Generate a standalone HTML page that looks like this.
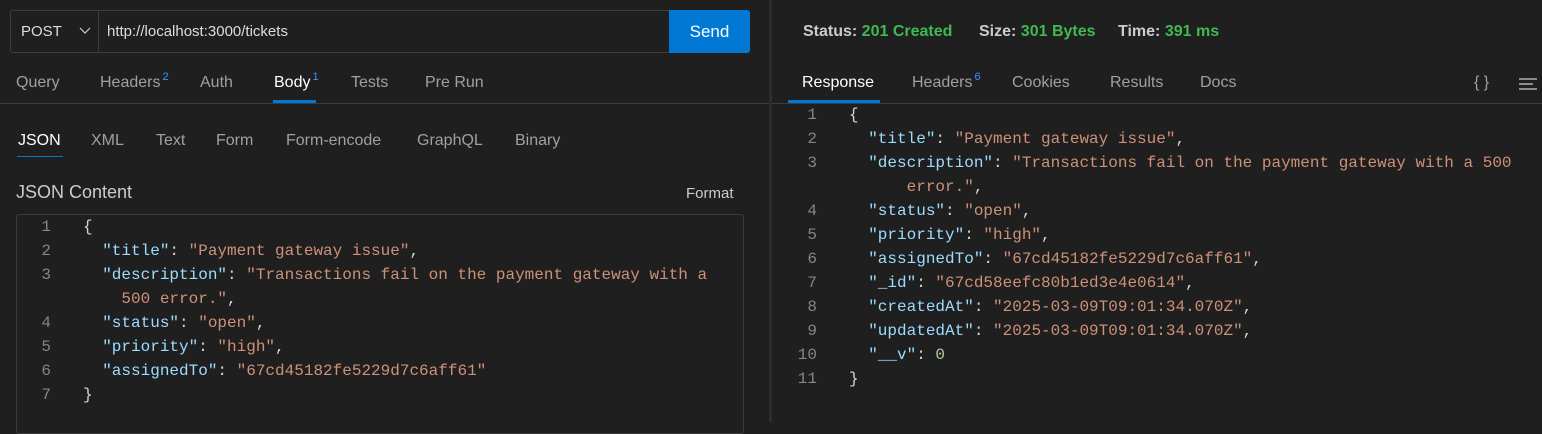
<!DOCTYPE html>
<html><head><meta charset="utf-8"><style>
*{margin:0;padding:0;box-sizing:border-box}
body{width:1542px;height:422px;background:#1f1f1f;font-family:"Liberation Sans",sans-serif;color:#ccc;position:relative;overflow:hidden}
.a{position:absolute;white-space:pre}
.t{font-size:16px;color:#a0a0a0}
.code{font-family:"Liberation Mono",monospace;font-size:16px;line-height:24px;color:#d4d4d4}
.k{color:#9cdcfe}.s{color:#ce9178}.n{color:#b5cea8}
.ln{color:#858585;text-align:right;width:20px}
sup{color:#3794ff;font-size:11px;position:relative;top:-2px;margin-left:2px;vertical-align:top;line-height:1}
.g{color:#3fb950}
</style></head><body>
<div class="a" style="left:10px;top:10px;width:740px;height:43px;border:1px solid #3c3c3c;border-radius:3px;background:#1f1f1f"></div>
<div class="a" style="left:98px;top:11px;width:1px;height:41px;background:#3c3c3c"></div>
<div class="a" style="left:21px;top:23px;font-size:15px;color:#ddd">POST</div>
<svg class="a" style="left:79px;top:27px" width="12" height="8"><path d="M1 1L6 6L11 1" stroke="#ccc" fill="none" stroke-width="1.2"/></svg>
<div class="a" style="left:107px;top:23px;font-size:15px;color:#ddd">http://localhost:3000/tickets</div>
<div class="a" style="left:669px;top:10px;width:81px;height:43px;background:#0078d4;border-radius:0 3px 3px 0;color:#fff;font-size:17px;text-align:center;line-height:43px">Send</div>

<div class="a t" style="left:16px;top:74px">Query</div>
<div class="a t" style="left:100px;top:74px">Headers<sup>2</sup></div>
<div class="a t" style="left:200px;top:74px">Auth</div>
<div class="a t" style="left:274px;top:74px;color:#fff">Body<sup>1</sup></div>
<div class="a" style="left:273px;top:100px;width:43px;height:3px;background:#0078d4"></div>
<div class="a t" style="left:351px;top:74px">Tests</div>
<div class="a t" style="left:425px;top:74px">Pre Run</div>
<div class="a" style="left:0;top:103px;width:769px;height:1px;background:#3c3c3c"></div>

<div class="a t" style="left:18px;top:132px;color:#fff">JSON</div>
<div class="a" style="left:17px;top:156px;width:46px;height:1px;background:#0078d4"></div>
<div class="a t" style="left:91px;top:132px">XML</div>
<div class="a t" style="left:156px;top:132px">Text</div>
<div class="a t" style="left:216px;top:132px">Form</div>
<div class="a t" style="left:286px;top:132px">Form-encode</div>
<div class="a t" style="left:417px;top:132px">GraphQL</div>
<div class="a t" style="left:515px;top:132px">Binary</div>

<div class="a" style="left:16px;top:182px;font-size:18px;color:#ccc">JSON Content</div>
<div class="a" style="left:686px;top:185px;font-size:15px;color:#ccc">Format</div>
<div class="a" style="left:16px;top:214px;width:728px;height:220px;border:1px solid #3c3c3c;border-radius:3px"></div>

<div class="a code" style="left:31px;top:215px"><div class="ln">1</div><div class="ln">2</div><div class="ln">3</div><div class="ln">&nbsp;</div><div class="ln">4</div><div class="ln">5</div><div class="ln">6</div><div class="ln">7</div></div>
<div class="a code" style="left:83px;top:215px">{
  <span class="k">"title"</span>: <span class="s">"Payment gateway issue"</span>,
  <span class="k">"description"</span>: <span class="s">"Transactions fail on the payment gateway with a</span>
<span class="s">    500 error."</span>,
  <span class="k">"status"</span>: <span class="s">"open"</span>,
  <span class="k">"priority"</span>: <span class="s">"high"</span>,
  <span class="k">"assignedTo"</span>: <span class="s">"67cd45182fe5229d7c6aff61"</span>
}</div>

<div class="a" style="left:769px;top:0;width:3px;height:422px;background:#2d2d2d"></div>

<div class="a" style="left:803px;top:23px;font-size:16px;font-weight:bold;color:#ccc">Status: <span class="g">201 Created</span></div>
<div class="a" style="left:979px;top:23px;font-size:16px;font-weight:bold;color:#ccc">Size: <span class="g">301 Bytes</span></div>
<div class="a" style="left:1118px;top:23px;font-size:16px;font-weight:bold;color:#ccc">Time: <span class="g">391 ms</span></div>

<div class="a t" style="left:802px;top:74px;color:#fff">Response</div>
<div class="a" style="left:788px;top:100px;width:92px;height:3px;background:#0078d4"></div>
<div class="a t" style="left:912px;top:74px">Headers<sup>6</sup></div>
<div class="a t" style="left:1012px;top:74px">Cookies</div>
<div class="a t" style="left:1110px;top:74px">Results</div>
<div class="a t" style="left:1200px;top:74px">Docs</div>
<div class="a t" style="left:1474px;top:74px">{ }</div>
<svg class="a" style="left:1518px;top:77px" width="20" height="14"><path d="M1 2H19M1 7H15M1 12H19" stroke="#ccc" stroke-width="1.3"/></svg>
<div class="a" style="left:772px;top:103px;width:770px;height:1px;background:#3c3c3c"></div>

<div class="a code" style="left:797px;top:103px"><div class="ln">1</div><div class="ln">2</div><div class="ln">3</div><div class="ln">&nbsp;</div><div class="ln">4</div><div class="ln">5</div><div class="ln">6</div><div class="ln">7</div><div class="ln">8</div><div class="ln">9</div><div class="ln">10</div><div class="ln">11</div></div>
<div class="a code" style="left:849px;top:103px">{
  <span class="k">"title"</span>: <span class="s">"Payment gateway issue"</span>,
  <span class="k">"description"</span>: <span class="s">"Transactions fail on the payment gateway with a 500</span>
<span class="s">      error."</span>,
  <span class="k">"status"</span>: <span class="s">"open"</span>,
  <span class="k">"priority"</span>: <span class="s">"high"</span>,
  <span class="k">"assignedTo"</span>: <span class="s">"67cd45182fe5229d7c6aff61"</span>,
  <span class="k">"_id"</span>: <span class="s">"67cd58eefc80b1ed3e4e0614"</span>,
  <span class="k">"createdAt"</span>: <span class="s">"2025-03-09T09:01:34.070Z"</span>,
  <span class="k">"updatedAt"</span>: <span class="s">"2025-03-09T09:01:34.070Z"</span>,
  <span class="k">"__v"</span>: <span class="n">0</span>
}</div>
</body></html>
